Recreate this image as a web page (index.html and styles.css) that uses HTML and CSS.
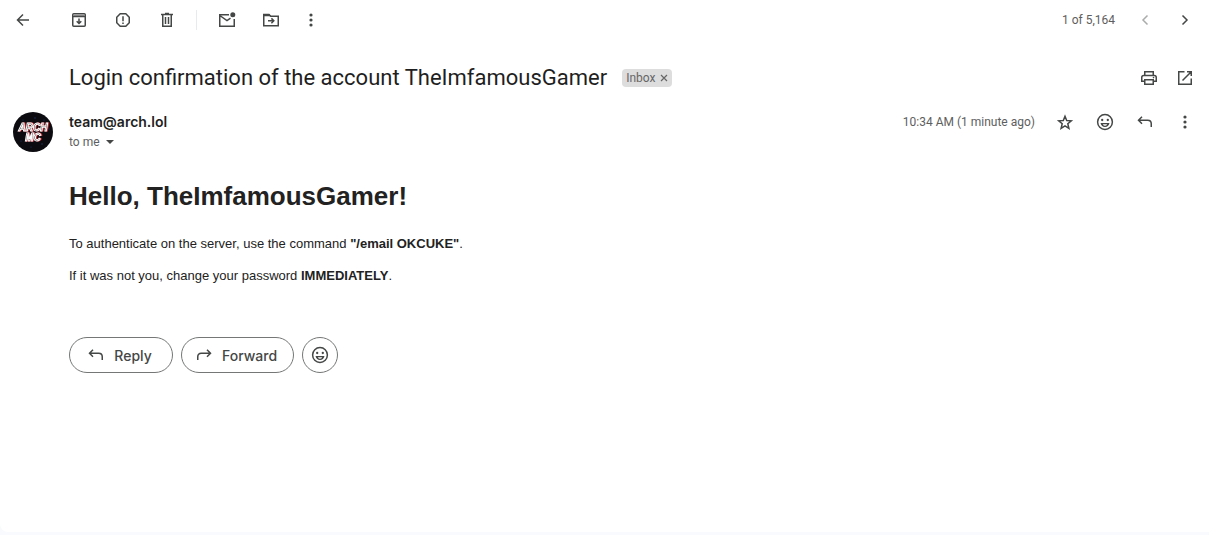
FILE: index.html
```html
<!DOCTYPE html>
<html lang="en">
<head>
<meta charset="utf-8">
<title>Login confirmation of the account TheImfamousGamer</title>
<link rel="stylesheet" href="styles.css">
</head>
<body>

<!-- icons -->
<svg class="sprite" aria-hidden="true">
  <symbol id="back" viewBox="0 0 20 20"><path d="M16 10H5M10 4.500L4.500 10l5.500 5.500"/></symbol>
  <symbol id="archive" viewBox="0 0 20 20"><rect x="3.750" y="3.750" width="12.500" height="12.500" rx="1"/><path class="tint" d="M4.500 4.500h11v1.500h-11z"/><path d="M4 6.500h12M10 8.500v5M7.700 11.200L10 13.500l2.300-2.300"/></symbol>
  <symbol id="spam" viewBox="0 0 20 20"><path d="M7.200 3.750h5.600l3.450 3.450v5.600l-3.450 3.450H7.200L3.750 12.800V7.200z"/><path d="M10 6.200v5M10 12.500v1.600"/></symbol>
  <symbol id="trash" viewBox="0 0 20 20"><path d="M4 4.500h12M8 3.600h4M5.750 5v11.250h8.500V5M8.500 7v7M11.500 7v7"/></symbol>
  <symbol id="unread" viewBox="0 0 20 20"><path d="M12 4.750H2.750v11.500h14.500V9M3.500 6l6.500 4.500 3.500-2.400"/><circle class="solid" cx="15.800" cy="4.800" r="2.500"/></symbol>
  <symbol id="move" viewBox="0 0 20 20"><path d="M2.750 15.750V4.500H8l1.700 1.750h7.550v9.500zM7 10.800h5.500M10.400 8.400l2.400 2.400-2.400 2.400"/><path class="solid" d="M2.500 4h5.700l2 2.300H2.500z"/></symbol>
  <symbol id="dots" viewBox="0 0 20 20"><g class="solid"><circle cx="10" cy="5" r="1.600"/><circle cx="10" cy="10" r="1.600"/><circle cx="10" cy="15" r="1.600"/></g></symbol>
  <symbol id="prev" viewBox="0 0 20 20"><path d="M12.500 5.500L8 10l4.500 4.500"/></symbol>
  <symbol id="next" viewBox="0 0 20 20"><path d="M7.500 5.500L12 10l-4.500 4.500"/></symbol>
  <symbol id="print" viewBox="0 0 20 20"><path d="M5.750 7V3.750h8.500V7M5.500 13.250H2.750V9.500Q2.750 7.500 4.750 7.500h10.500q2 0 2 2v3.750H14.500M5.750 11.750h8.500v4.500h-8.500z"/><circle class="solid" cx="14.500" cy="9.600" r=".8"/></symbol>
  <symbol id="popout" viewBox="0 0 20 20"><path d="M9.500 3.750H3.750v12.500h12.500V10.500M12 3.750h4.250V8M16 4L7.500 12.500"/></symbol>
  <symbol id="star" viewBox="0 0 20 20"><path d="M10 4.200l1.700 4.300 4.600.3-3.500 3 1.100 4.500L10 13.900l-3.900 2.400 1.100-4.500-3.500-3 4.600-.3z"/></symbol>
  <symbol id="smile" viewBox="0 0 20 20"><circle cx="10" cy="10" r="7.400"/><g class="solid"><circle cx="7.200" cy="8" r="1.150"/><circle cx="12.800" cy="8" r="1.150"/><path fill-rule="evenodd" d="M5.500 11h9q-1 4-4.500 4t-4.500-4zM7.800 12.200q.8 1.500 2.200 1.500t2.200-1.500z"/></g></symbol>
  <symbol id="reply" viewBox="0 0 20 20"><path d="M7 4.800L3.500 8.300 7 11.800M4 8.300h8.700q3.550 0 3.550 3.500V15"/></symbol>
  <symbol id="forward" viewBox="0 0 20 20"><path d="M13 4.800l3.500 3.500L13 11.800M16 8.300H7.300q-3.550 0-3.550 3.500V15"/></symbol>
</svg>

<main class="mail">
  <header class="toolbar">
    <button class="icon back" aria-label="Back"><svg><use href="#back"/></svg></button>
    <div class="tools">
      <button class="icon" aria-label="Archive"><svg><use href="#archive"/></svg></button>
      <button class="icon" aria-label="Report spam"><svg><use href="#spam"/></svg></button>
      <button class="icon" aria-label="Delete"><svg><use href="#trash"/></svg></button>
    </div>
    <div class="tools second">
      <button class="icon" aria-label="Mark as unread"><svg><use href="#unread"/></svg></button>
      <button class="icon" aria-label="Move to"><svg><use href="#move"/></svg></button>
      <button class="icon" aria-label="More"><svg><use href="#dots"/></svg></button>
    </div>
    <span class="count">1 of 5,164</span>
    <div class="pager">
      <button class="icon" aria-label="Newer" disabled><svg><use href="#prev"/></svg></button>
      <button class="icon" aria-label="Older"><svg><use href="#next"/></svg></button>
    </div>
  </header>

  <div class="subject">
    <h1>Login confirmation of the account TheImfamousGamer</h1>
    <span class="label">Inbox <button class="remove" aria-label="Remove label Inbox"><svg viewBox="0 0 8 8"><path d="M1 1l6 6M7 1L1 7"/></svg></button></span>
    <div class="subject-tools">
      <button class="icon" aria-label="Print all"><svg><use href="#print"/></svg></button>
      <button class="icon" aria-label="In new window"><svg><use href="#popout"/></svg></button>
    </div>
  </div>

  <article class="message">
    <svg class="avatar" viewBox="0 0 40 40" role="img" aria-label="Arch MC">
      <circle class="disc" cx="20" cy="20" r="20"/>
      <g class="specks"><circle cx="22" cy="6" r=".7"/><circle cx="31" cy="8" r=".6"/><circle cx="10" cy="8" r=".5"/><circle cx="36" cy="17" r=".6"/><circle cx="8" cy="29" r=".6"/><circle cx="29" cy="32" r=".7"/><circle cx="18" cy="35" r=".5"/></g>
      <text x="20" y="19">ARCH</text>
      <text x="20" y="29">MC</text>
    </svg>
    <div class="content">
      <div class="meta">
        <div class="who">
          <h2>team@arch.lol</h2>
          <button class="to">to me <svg viewBox="0 0 8 4"><path d="M0 0h8L4 4z"/></svg></button>
        </div>
        <time class="time">10:34 AM (1 minute ago)</time>
        <div class="actions">
          <button class="icon" aria-label="Star"><svg><use href="#star"/></svg></button>
          <button class="icon" aria-label="Add reaction"><svg><use href="#smile"/></svg></button>
          <button class="icon" aria-label="Reply"><svg><use href="#reply"/></svg></button>
          <button class="icon" aria-label="More"><svg><use href="#dots"/></svg></button>
        </div>
      </div>

      <div class="body">
        <h1>Hello, TheImfamousGamer!</h1>
        <p>To authenticate on the server, use the command <b>"/email OKCUKE"</b>.</p>
        <p>If it was not you, change your password <b>IMMEDIATELY</b>.</p>
      </div>

      <div class="respond">
        <button class="pill"><svg><use href="#reply"/></svg>Reply</button>
        <button class="pill"><svg><use href="#forward"/></svg>Forward</button>
        <button class="pill round" aria-label="Add reaction"><svg><use href="#smile"/></svg></button>
      </div>
    </div>
  </article>
</main>

</body>
</html>
```
FILE: styles.css
```css
* {
    box-sizing: border-box;
}

body {
    margin: 0;
    min-height: 100vh;
    display: flex;
    padding-bottom: 3px;
    background: #f8fafd;
    color: #1f1f1f;
    font-family: Roboto, "Liberation Sans", sans-serif;
}

h1, h2, p {
    margin: 0;
}

button {
    padding: 0;
    border: 0;
    background: none;
    color: inherit;
    font: inherit;
    cursor: pointer;
}

.sprite {
    display: none;
}

svg {
    display: block;
    fill: none;
    stroke: #444746;
    stroke-width: 1.5;
}

.solid {
    fill: #444746;
    stroke: none;
}

.tint {
    fill: #999;
    stroke: none;
}

.mail {
    flex: 1;
    background: #fff;
    border-bottom-left-radius: 8px;
}

.icon {
    display: flex;
    width: 20px;
    height: 20px;
}

.icon svg {
    width: 20px;
    height: 20px;
}

.icon:disabled {
    opacity: .45;
}

/* top bar */
.toolbar {
    display: flex;
    align-items: center;
    height: 40px;
    padding: 0 14px 0 13px;
}

.back {
    margin-right: 36px;
}

.tools {
    display: flex;
    gap: 24px;
}

.second {
    margin-left: 19px;
    padding-left: 20px;
    border-left: 1px solid #e8eaed;
}

.second .icon:last-child {
    margin-left: -4px;
}

.count {
    margin-left: auto;
    color: #5e5e5e;
    font-size: 12px;
}

.pager {
    display: flex;
    gap: 20px;
    margin-left: 20px;
}

/* subject line */
.subject {
    display: flex;
    align-items: center;
    padding: 20px 14px 0 69px;
}

.subject h1 {
    font-size: 22px;
    font-weight: 400;
    line-height: 36px;
}

.label {
    display: flex;
    align-items: center;
    gap: 5px;
    height: 18px;
    margin-left: 15px;
    padding: 0 4px;
    border-radius: 4px;
    background: #ddd;
    color: #666;
    font-size: 12px;
}

.remove svg {
    width: 8px;
    height: 8px;
    stroke: #666;
    stroke-width: 1.2;
}

.subject-tools {
    display: flex;
    gap: 16px;
    margin-left: auto;
}

/* message */
.message {
    display: flex;
    gap: 16px;
    padding: 16px 14px 0 13px;
}

.avatar {
    flex: none;
    width: 40px;
    height: 40px;
    stroke: none;
}

.disc {
    fill: #0b0b10;
}

.specks {
    fill: #24386e;
}

.avatar text {
    fill: #111;
    stroke: #fff;
    stroke-width: 1;
    font: italic bold 10px "Liberation Sans", sans-serif;
    text-anchor: middle;
    filter: drop-shadow(1px 0 0 #d2232f);
}

.content {
    flex: 1;
}

.meta {
    display: flex;
    height: 40px;
}

.who h2 {
    font-family: Inter, sans-serif;
    font-size: 14px;
    font-weight: 600;
    line-height: 20px;
}

.to {
    display: flex;
    align-items: center;
    gap: 6px;
    color: #5e5e5e;
    font-size: 12px;
    line-height: 20px;
}

.to svg {
    width: 8px;
    height: 4px;
    fill: #444746;
    stroke: none;
}

.time {
    margin-left: auto;
    color: #5e5e5e;
    font-size: 12px;
    line-height: 20px;
}

.actions {
    display: flex;
    gap: 20px;
    margin-left: 20px;
}

.body {
    padding-top: 28px;
    color: #222;
    font: 13px/20px "Liberation Sans", Arial, sans-serif;
}

.body h1 {
    margin-bottom: 22px;
    font-size: 26px;
    line-height: 32px;
}

.body p {
    margin-bottom: 12px;
}

/* reply buttons */
.respond {
    display: flex;
    gap: 8px;
    padding-top: 39px;
}

.pill {
    display: flex;
    align-items: center;
    justify-content: center;
    gap: 8px;
    min-width: 104px;
    height: 36px;
    padding: 0 16px 0 12px;
    border: 1px solid #747775;
    border-radius: 18px;
    color: #444746;
    font-family: Inter, sans-serif;
    font-size: 14px;
    font-weight: 500;
}

.pill svg {
    width: 20px;
    height: 20px;
}

.round {
    min-width: 36px;
    padding: 0;
}
```
